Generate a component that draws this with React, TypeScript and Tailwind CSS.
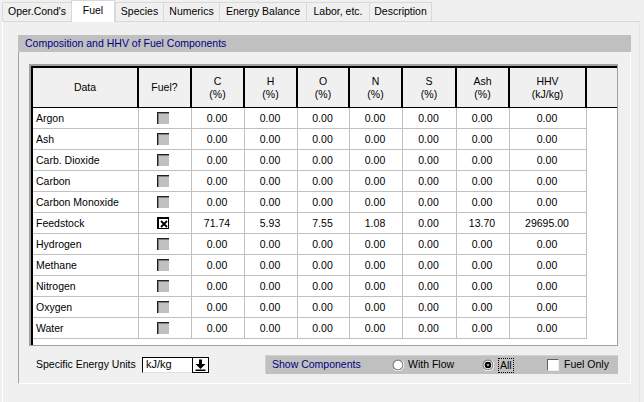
import React from "react";

const tabs = [
  { label: "Oper.Cond's", w: "w-[69px]", sel: false },
  { label: "Fuel", w: "w-[44px]", sel: true },
  { label: "Species", w: "w-[48px]", sel: false },
  { label: "Numerics", w: "w-[56px]", sel: false },
  { label: "Energy Balance", w: "w-[87px]", sel: false },
  { label: "Labor, etc.", w: "w-[63px]", sel: false },
  { label: "Description", w: "w-[63px]", sel: false, last: true },
];

const Z = ["0.00", "0.00", "0.00", "0.00", "0.00", "0.00", "0.00"];
const rows: { name: string; fuel: boolean; vals: string[] }[] = [
  { name: "Argon", fuel: false, vals: Z },
  { name: "Ash", fuel: false, vals: Z },
  { name: "Carb. Dioxide", fuel: false, vals: Z },
  { name: "Carbon", fuel: false, vals: Z },
  { name: "Carbon Monoxide", fuel: false, vals: Z },
  { name: "Feedstock", fuel: true, vals: ["71.74", "5.93", "7.55", "1.08", "0.00", "13.70", "29695.00"] },
  { name: "Hydrogen", fuel: false, vals: Z },
  { name: "Methane", fuel: false, vals: Z },
  { name: "Nitrogen", fuel: false, vals: Z },
  { name: "Oxygen", fuel: false, vals: Z },
  { name: "Water", fuel: false, vals: Z },
];

const headers: [string, string?][] = [
  ["Data"],
  ["Fuel?"],
  ["C", "(%)"],
  ["H", "(%)"],
  ["O", "(%)"],
  ["N", "(%)"],
  ["S", "(%)"],
  ["Ash", "(%)"],
  ["HHV", "(kJ/kg)"],
];

const GRID = "grid grid-cols-[106px_53px_53px_53px_52px_53px_54px_53px_77px_1fr]";

function DisabledBox() {
  return <div className="w-[12px] h-[12px] bg-[#c0c0c0] border-t border-l border-[#202020] shadow-[inset_1px_1px_0_#808080]" />;
}

function CheckedBox() {
  return (
    <div className="w-[12px] h-[12px] bg-white border border-black border-t-2 border-l-2 flex items-center justify-center">
      <svg width="8" height="8" viewBox="0 0 8 8">
        <path d="M1 1 L7 7 M7 1 L1 7" stroke="black" strokeWidth="1.8" />
      </svg>
    </div>
  );
}

function Radio({ on }: { on: boolean }) {
  return (
    <svg width="12" height="12" viewBox="0 0 12 12">
      <circle cx="6" cy="6" r="5.5" fill="#808080" />
      <path d="M1.8 10.2 A5.5 5.5 0 0 0 10.2 1.8" stroke="#ffffff" strokeWidth="1" fill="none" />
      <circle cx="6" cy="6" r="4.3" fill="#ffffff" />
      {on && <circle cx="6" cy="6" r="3.3" fill="#000" />}
      {on && <circle cx="6" cy="6" r="1.3" fill="#9a9a9a" />}
    </svg>
  );
}

export default function App() {
  return (
    <div className="w-[644px] h-[402px] bg-[#f0f0f0] overflow-hidden text-[10.5px] text-black flex flex-col [font-family:'Liberation_Sans',Arial,sans-serif]">
      {/* Tab strip */}
      <div className="h-[21px] flex items-end pl-[2px] relative z-10">
        {tabs.map((t) =>
          t.sel ? (
            <div
              key={t.label}
              className={`${t.w} h-[22px] -mb-[1px] bg-white border-t border-l border-r border-[#d9d9d9] flex items-center justify-center pb-[1px]`}
            >
              {t.label}
            </div>
          ) : (
            <div
              key={t.label}
              className={`${t.w} h-[19px] border-t border-l border-[#d9d9d9] ${t.last ? "border-r" : ""} flex items-center justify-center`}
            >
              {t.label}
            </div>
          )
        )}
      </div>

      {/* Tab panel */}
      <div className="ml-[2px] w-[638px] flex-1 border-t border-[#d9d9d9] border-l border-l-white border-r border-r-[#e4e4e4] pl-[15px] pt-[13px]">
        {/* Group box */}
        <div className="w-[613px] h-[349px] flex flex-col">
          <div className="h-[17px] bg-[#c0c0c0] pl-[7px] flex items-center text-[#000080]">
            Composition and HHV of Fuel Components
          </div>
          <div className="flex-1 border-l border-l-[#a0a0a0] border-r border-r-white border-b border-b-white pl-[10px] pt-[12px]">
            {/* Table frame */}
            <div className="w-[589px] h-[282px] border-t-2 border-l-2 border-r border-b border-[#a0a0a0]">
              <div className="w-full h-full border-t-2 border-l-2 border-black bg-white flex flex-col">
                {/* Header */}
                <div className={`${GRID} h-[40px] bg-[#f0f0f0] border-b border-black`}>
                  {headers.map(([a, b]) => (
                    <div key={a} className="border-r-2 border-black flex flex-col items-center justify-center leading-[13px]">
                      <span>{a}</span>
                      {b && <span>{b}</span>}
                    </div>
                  ))}
                  <div />
                </div>
                {/* Body */}
                {rows.map((r) => (
                  <div key={r.name} className={`${GRID} h-[21px]`}>
                    <div className="border-r border-b border-[#c0c0c0] flex items-center pl-[3px] pt-[1px]">{r.name}</div>
                    <div className="border-r border-b border-[#c0c0c0] flex items-center justify-center pr-[4px]">
                      {r.fuel ? <CheckedBox /> : <DisabledBox />}
                    </div>
                    {r.vals.map((v, i) => (
                      <div key={i} className="border-r border-b border-[#c0c0c0] flex items-center justify-center pr-[2px] pt-[1px]">
                        {v}
                      </div>
                    ))}
                    <div />
                  </div>
                ))}
              </div>
            </div>

            {/* Bottom controls */}
            <div className="w-[589px] mt-[9px] h-[19px] flex items-center">
              <span className="ml-[7px] w-[106px]">Specific Energy Units</span>
              <div className="w-[50px] h-[16px] bg-white border-t border-l border-black border-b border-b-[#e0e0e0] pl-[3px] flex items-center text-[11px]">
                kJ/kg
              </div>
              <div className="w-[17px] h-[16px] bg-white border border-black flex items-center justify-center">
                <svg width="11" height="12" viewBox="0 0 11 12">
                  <rect x="4" y="0.5" width="3" height="5" fill="#000" />
                  <polygon points="0.5,5 10.5,5 5.5,10" fill="#000" />
                  <rect x="0.5" y="10.5" width="10" height="1.5" fill="#000" />
                </svg>
              </div>
              <div className="ml-auto w-[353px] h-[19px] bg-[#c0c0c0] border-l border-t border-[#d0d0d0] pl-[6px] flex items-center">
                <span className="w-[120px] text-[#000080]">Show Components</span>
                <div className="w-[90px] flex items-center gap-[4px]">
                  <Radio on={false} />
                  <span>With Flow</span>
                </div>
                <div className="w-[65px] flex items-center gap-[4px]">
                  <Radio on={true} />
                  <span className="border border-dotted border-black px-[1px] leading-[13px]">All</span>
                </div>
                <div className="flex items-center gap-[5px]">
                  <div className="w-[12px] h-[12px] bg-white border-t border-l border-[#606060] border-b border-r border-b-[#f0f0f0] border-r-[#f0f0f0]" />
                  <span>Fuel Only</span>
                </div>
              </div>
            </div>
          </div>
        </div>
      </div>
    </div>
  );
}
